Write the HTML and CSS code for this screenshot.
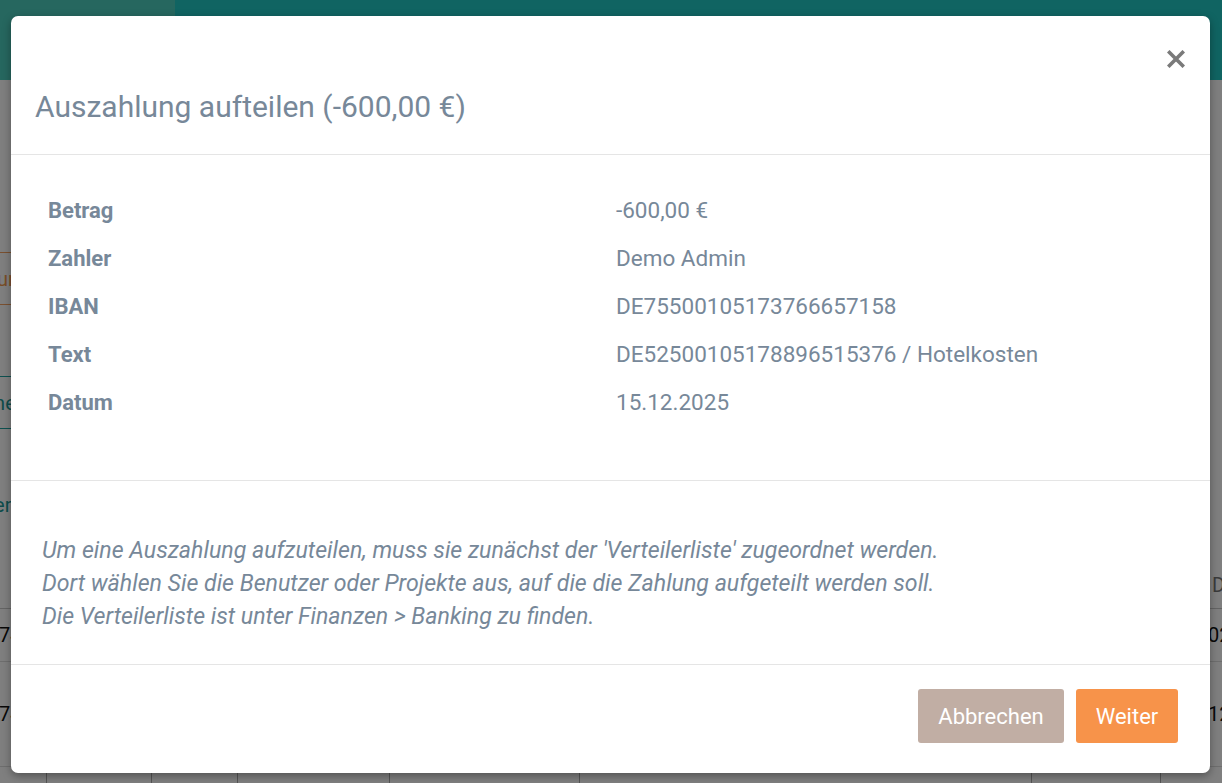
FILE: index.html
```html
<!DOCTYPE html>
<html lang="de">
<head>
<meta charset="utf-8">
<title>Auszahlung aufteilen</title>
<link rel="stylesheet" href="styles.css">
</head>
<body>
<div class="page">
  <header class="topbar">
    <div class="brand"></div>
    <div class="topbar-rest"></div>
  </header>
  <main class="content">
    <div class="spacer-a"></div>
    <div class="box box-orange"><span class="shift-orange">Buchungen</span></div>
    <div class="spacer-b"></div>
    <div class="box box-teal"><span class="shift-teal">Zuordnen</span></div>
    <div class="link-row"><span class="shift-link">Verteiler</span></div>
    <div class="table">
      <div class="thead"><span class="left-cell">Nr</span><span class="right-cell muted">Datum</span></div>
      <div class="trow first"><span class="left-cell">74</span><span class="right-cell">02.12.2025</span></div>
      <div class="trow second"><span class="left-cell">74</span><span class="right-cell">12.12.2025</span></div>
      <div class="trow cells">
        <span class="c1"></span><span class="c2"></span><span class="c3"></span><span class="c4"></span><span class="c5"></span><span class="c6"></span><span class="c7"></span><span class="c8"></span>
      </div>
    </div>
  </main>
</div>
<div class="backdrop"></div>
<div class="modal">
  <div class="modal-header">
    <h2 class="modal-title">Auszahlung aufteilen (-600,00 €)</h2>
    <button class="close" aria-label="Schließen">
      <svg width="18" height="18" viewBox="0 0 18 18"><path d="M2.5 2.5 L15.5 15.5 M15.5 2.5 L2.5 15.5" stroke="#7a7a7a" stroke-width="3.6" stroke-linecap="square"/></svg>
    </button>
  </div>
  <div class="modal-section details">
    <div class="row"><div class="label">Betrag</div><div class="value">-600,00 €</div></div>
    <div class="row"><div class="label">Zahler</div><div class="value">Demo Admin</div></div>
    <div class="row"><div class="label">IBAN</div><div class="value">DE75500105173766657158</div></div>
    <div class="row"><div class="label">Text</div><div class="value">DE52500105178896515376 / Hotelkosten</div></div>
    <div class="row"><div class="label">Datum</div><div class="value">15.12.2025</div></div>
  </div>
  <div class="modal-section note">
    <p>Um eine Auszahlung aufzuteilen, muss sie zunächst der 'Verteilerliste' zugeordnet werden.<br>
    Dort wählen Sie die Benutzer oder Projekte aus, auf die die Zahlung aufgeteilt werden soll.<br>
    Die Verteilerliste ist unter Finanzen &gt; Banking zu finden.</p>
  </div>
  <div class="modal-footer">
    <button class="btn btn-cancel">Abbrechen</button>
    <button class="btn btn-next">Weiter</button>
  </div>
</div>
</body>
</html>
```
FILE: styles.css
```css
* { box-sizing: border-box; }
html, body { margin: 0; padding: 0; }
body {
  width: 1222px;
  height: 783px;
  overflow: hidden;
  font-family: Roboto, "Liberation Sans", sans-serif;
  background: #ffffff;
  position: relative;
}

/* background page (dimmed by the backdrop) */
.page { width: 1222px; height: 783px; display: flex; flex-direction: column; overflow: hidden; }
.topbar { height: 80px; display: flex; flex-shrink: 0; }
.brand { width: 175px; background: #4ccebe; }
.topbar-rest { flex: 1; background: #20c8c4; }
.content { flex: 1; display: flex; flex-direction: column; font-size: 20px; line-height: 20px; white-space: nowrap; }
.spacer-a { height: 172px; flex-shrink: 0; }
.box {
  height: 53px;
  width: 200px;
  display: flex;
  align-items: center;
  flex-shrink: 0;
}
.box-orange { border-top: 1px solid #f5a060; border-bottom: 1px solid #f5a060; color: #f29a4e; }
.shift-orange { margin-left: -48px; }
.spacer-b { height: 71px; flex-shrink: 0; }
.box-teal { border-top: 1px solid #1ca2a0; border-bottom: 1px solid #1ca2a0; color: #1a9896; }
.shift-teal { margin-left: -58px; }
.link-row { height: 120px; padding-top: 66px; color: #1a9896; flex-shrink: 0; }
.shift-link { margin-left: -63px; }
.table { display: flex; flex-direction: column; color: #111; }
.thead { height: 60px; border-bottom: 1px solid #c8c8c8; display: flex; justify-content: space-between; align-items: flex-end; padding-bottom: 13px; color: #777; }
.trow { border-bottom: 1px solid #dddddd; display: flex; justify-content: space-between; align-items: center; }
.trow.first { height: 53px; }
.trow.second { height: 105px; }
.left-cell { display: block; width: 100px; margin-left: -1px; }
.thead .left-cell { visibility: hidden; }
.right-cell { display: block; width: 100px; margin-right: -86px; }
.thead .right-cell { margin-right: -90px; }
.cells { height: 40px; align-items: stretch; justify-content: flex-start; border-bottom: 0; }
.cells span { border-right: 1px solid #aaaaaa; height: 100%; }
.cells .c1 { width: 47px; }
.cells .c2 { width: 105px; }
.cells .c3 { width: 86px; }
.cells .c4 { width: 152px; }
.cells .c5 { width: 190px; }
.cells .c6 { width: 452px; }
.cells .c7 { width: 129px; }
.cells .c8 { width: 61px; border-right: 0; }

.backdrop {
  position: absolute;
  inset: 0;
  background: rgba(0, 0, 0, 0.5);
}

/* modal */
.modal {
  position: absolute;
  left: 11px;
  top: 16px;
  width: 1199px;
  height: 757px;
  background: #fff;
  border-radius: 7px;
  box-shadow: 0 3px 9px rgba(0,0,0,0.35);
  display: flex;
  flex-direction: column;
  color: #778899;
}
.modal-header {
  height: 139px;
  border-bottom: 1px solid #e5e5e5;
  position: relative;
  display: flex;
  align-items: flex-end;
  padding: 0 25px 29px 24px;
}
.modal-title {
  margin: 0;
  font-size: 30px;
  font-weight: 400;
  line-height: 36px;
  color: #778899;
}
.close {
  position: absolute;
  right: 25px;
  top: 34px;
  background: none;
  border: 0;
  padding: 0;
  width: 18px;
  height: 18px;
  cursor: pointer;
}
.close svg { display: block; }

.modal-section { border-bottom: 1px solid #e5e5e5; }
.details { height: 326px; padding: 31px 37px 0 37px; display: flex; flex-direction: column; }
.row { height: 48px; display: flex; align-items: center; font-size: 22.5px; }
.label { width: 568px; font-weight: 700; font-size: 22px; }
.value { flex: 1; }

.note { height: 184px; padding: 53px 31px 0 31px; }
.note p { margin: 0; font-style: italic; font-size: 23.15px; line-height: 33px; }

.modal-footer {
  flex: 1;
  display: flex;
  justify-content: flex-end;
  align-items: flex-start;
  gap: 12px;
  padding: 24px 32px 0 0;
}
.btn {
  height: 54px;
  border: 0;
  border-radius: 3px;
  color: #fff;
  font-family: Roboto, "Liberation Sans", sans-serif;
  font-size: 22px;
  padding: 0;
  cursor: pointer;
}
.btn-cancel { background: #c1aea4; width: 146px; }
.btn-next { background: #f7934a; width: 102px; }
```
